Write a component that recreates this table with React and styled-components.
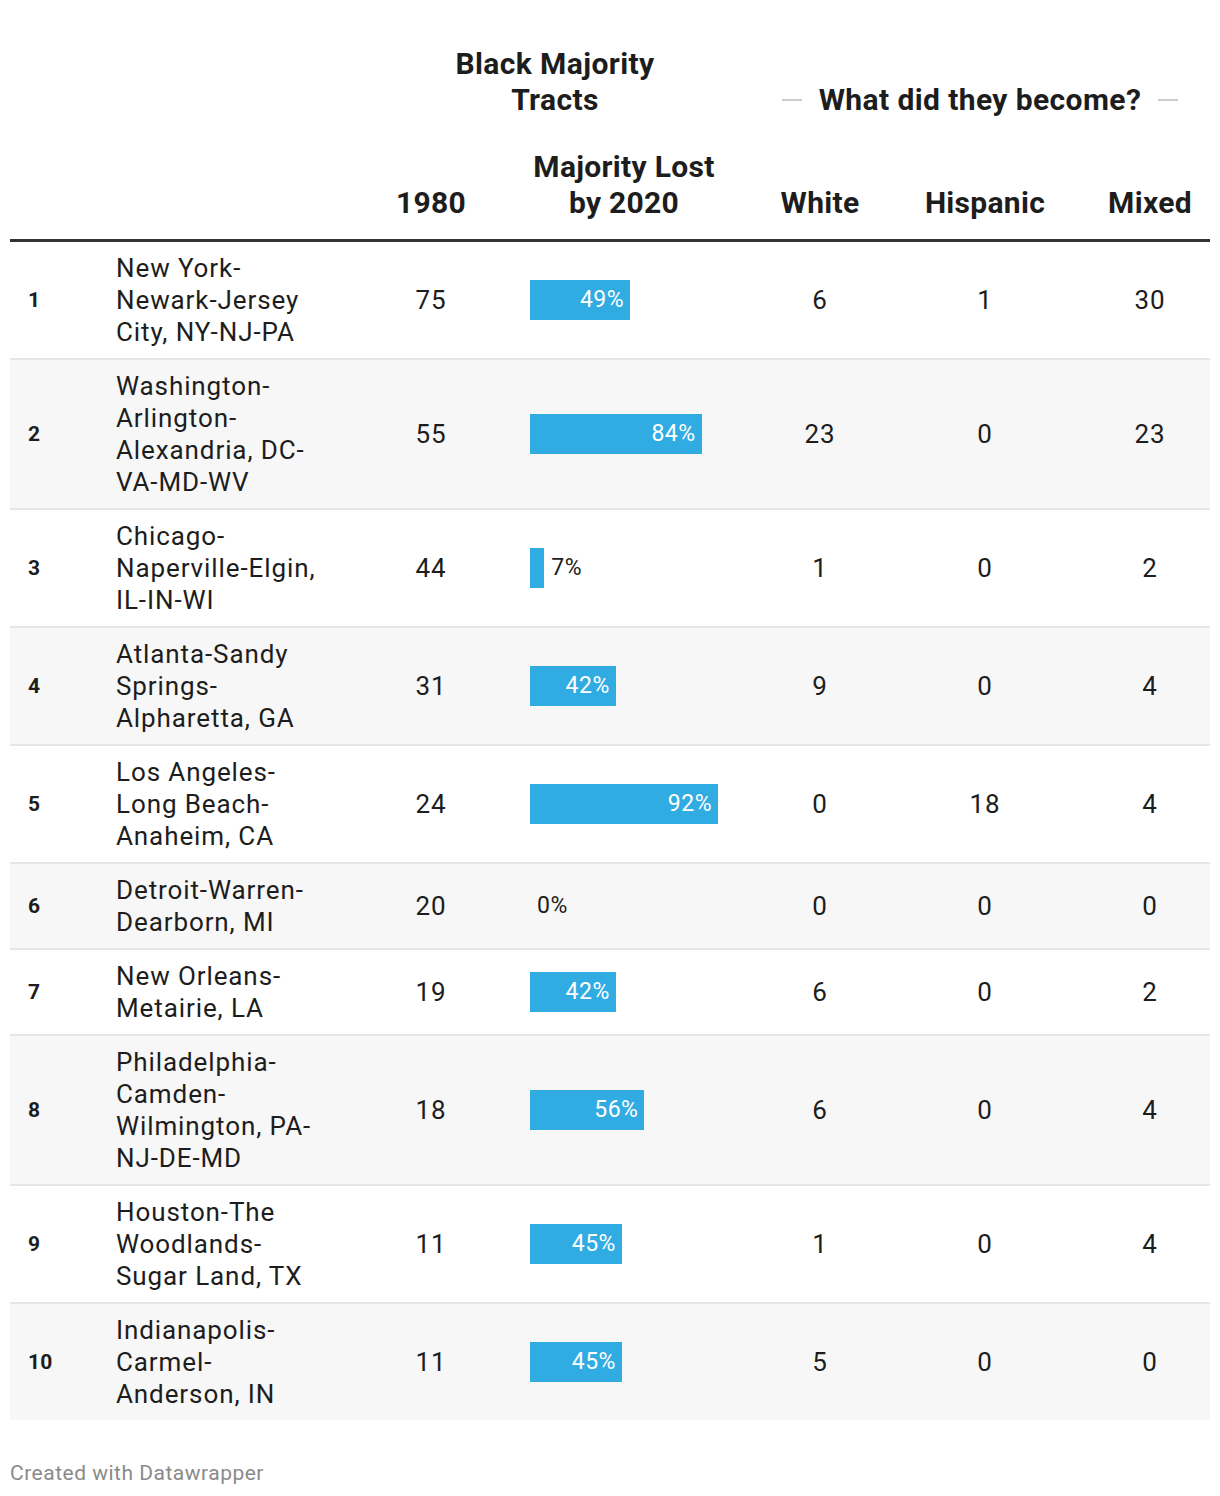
import React from 'react';
import styled, { createGlobalStyle } from 'styled-components';

const colors = {
  text: '#1d1d1d',
  bar: '#31ace2',
  stripe: '#f7f7f7',
  rule: '#e6e6e6',
  heavy: '#333333',
  muted: '#8a8a8a',
};

const COLS = '94px 240px 174px 212px 150px 210px 120px';
const BAR_MAX = 188;
const MAX_PCT = 92;

const rows = [
  {rank: 1, name: ['New York-', 'Newark-Jersey', 'City, NY-NJ-PA'], y1980: 75, lost: 49, white: 6, hispanic: 1, mixed: 30},
  {rank: 2, name: ['Washington-', 'Arlington-', 'Alexandria, DC-', 'VA-MD-WV'], y1980: 55, lost: 84, white: 23, hispanic: 0, mixed: 23},
  {rank: 3, name: ['Chicago-', 'Naperville-Elgin,', 'IL-IN-WI'], y1980: 44, lost: 7, white: 1, hispanic: 0, mixed: 2},
  {rank: 4, name: ['Atlanta-Sandy', 'Springs-', 'Alpharetta, GA'], y1980: 31, lost: 42, white: 9, hispanic: 0, mixed: 4},
  {rank: 5, name: ['Los Angeles-', 'Long Beach-', 'Anaheim, CA'], y1980: 24, lost: 92, white: 0, hispanic: 18, mixed: 4},
  {rank: 6, name: ['Detroit-Warren-', 'Dearborn, MI'], y1980: 20, lost: 0, white: 0, hispanic: 0, mixed: 0},
  {rank: 7, name: ['New Orleans-', 'Metairie, LA'], y1980: 19, lost: 42, white: 6, hispanic: 0, mixed: 2},
  {rank: 8, name: ['Philadelphia-', 'Camden-', 'Wilmington, PA-', 'NJ-DE-MD'], y1980: 18, lost: 56, white: 6, hispanic: 0, mixed: 4},
  {rank: 9, name: ['Houston-The', 'Woodlands-', 'Sugar Land, TX'], y1980: 11, lost: 45, white: 1, hispanic: 0, mixed: 4},
  {rank: 10, name: ['Indianapolis-', 'Carmel-', 'Anderson, IN'], y1980: 11, lost: 45, white: 5, hispanic: 0, mixed: 0},
];

const GlobalStyle = createGlobalStyle`
  html, body {
    margin: 0;
    padding: 0;
    background: #fff;
  }
  body {
    font-family: Roboto, "Liberation Sans", Arial, sans-serif;
    color: ${colors.text};
  }
`;

const Chart = styled.div`
  width: 1200px;
  padding: 10px;
`;

const GroupRow = styled.div`
  display: grid;
  grid-template-columns: 370px 350px 480px;
  align-items: end;
  margin-top: 36px;
  font-size: 30px;
  line-height: 36px;
  font-weight: 700;
  letter-spacing: 0.4px;
`;

const GroupCell = styled.div`
  text-align: center;
`;

const GroupLined = styled.div`
  display: flex;
  align-items: center;
  justify-content: center;
  gap: 17px;
  padding-left: 20px;

  &::before, &::after {
    content: "";
    width: 20px;
    height: 2px;
    background: #cccccc;
  }
`;

const HeadRow = styled.div`
  display: grid;
  grid-template-columns: ${COLS};
  align-items: end;
  padding: 31px 0 18px;
  border-bottom: 3px solid ${colors.heavy};
  font-size: 30px;
  line-height: 36px;
  font-weight: 700;
  letter-spacing: 0.3px;
`;

const HeadCell = styled.div`
  text-align: center;
  padding-left: ${({$padLeft}) => $padLeft || 0}px;
`;

const Row = styled.div`
  display: grid;
  grid-template-columns: ${COLS};
  align-items: center;
  background: ${({$striped}) => ($striped ? colors.stripe : '#fff')};
  border-bottom: ${({$last}) => ($last ? 'none' : `2px solid ${colors.rule}`)};
  font-size: 26px;
  line-height: 32px;
  letter-spacing: 0.9px;
`;

const Cell = styled.div`
  padding: 10px 0;
  text-align: ${({$align}) => $align || 'center'};
  padding-left: ${({$padLeft}) => $padLeft || 0}px;
`;

const Rank = styled(Cell)`
  font-size: 21px;
  font-weight: 700;
  letter-spacing: 0.3px;
`;

const NameLine = styled.span`
  display: block;
  white-space: nowrap;
`;

const BarCell = styled.div`
  display: flex;
  align-items: center;
  padding: 0 12px;
`;

const Bar = styled.div`
  height: 40px;
  background: ${colors.bar};
  flex: none;
  display: flex;
  align-items: center;
  justify-content: flex-end;
`;

const BarLabel = styled.span`
  font-size: 23px;
  line-height: 40px;
  letter-spacing: 0.5px;
  color: ${({$inside}) => ($inside ? '#fff' : colors.text)};
  padding: ${({$inside}) => ($inside ? '0 6px 0 0' : '0 0 0 7px')};
`;

const Footer = styled.div`
  margin-top: 40px;
  font-size: 21px;
  line-height: 26px;
  letter-spacing: 0.5px;
  color: ${colors.muted};
`;

const LostBar = ({pct}) => {
  const width = (pct / MAX_PCT) * BAR_MAX;
  const inside = pct >= 20;
  return (
    <BarCell>
      <Bar style={{width}}>
        {inside && <BarLabel $inside>{pct}%</BarLabel>}
      </Bar>
      {!inside && <BarLabel>{pct}%</BarLabel>}
    </BarCell>
  );
};

const App = () => (
  <>
    <GlobalStyle />
    <Chart>
      <GroupRow>
        <div />
        <GroupCell>Black Majority<br />Tracts</GroupCell>
        <GroupLined>What did they become?</GroupLined>
      </GroupRow>
      <HeadRow>
        <HeadCell />
        <HeadCell />
        <HeadCell>1980</HeadCell>
        <HeadCell>Majority Lost<br />by 2020</HeadCell>
        <HeadCell $padLeft={30}>White</HeadCell>
        <HeadCell>Hispanic</HeadCell>
        <HeadCell>Mixed</HeadCell>
      </HeadRow>
      {rows.map((r, i) => (
        <Row key={r.rank} $striped={i % 2 === 1} $last={i === rows.length - 1}>
          <Rank $align="left" $padLeft={18}>{r.rank}</Rank>
          <Cell $align="left" $padLeft={12}>
            {r.name.map((line) => <NameLine key={line}>{line}</NameLine>)}
          </Cell>
          <Cell>{r.y1980}</Cell>
          <LostBar pct={r.lost} />
          <Cell $padLeft={30}>{r.white}</Cell>
          <Cell>{r.hispanic}</Cell>
          <Cell>{r.mixed}</Cell>
        </Row>
      ))}
      <Footer>Created with Datawrapper</Footer>
    </Chart>
  </>
);

export default App;
